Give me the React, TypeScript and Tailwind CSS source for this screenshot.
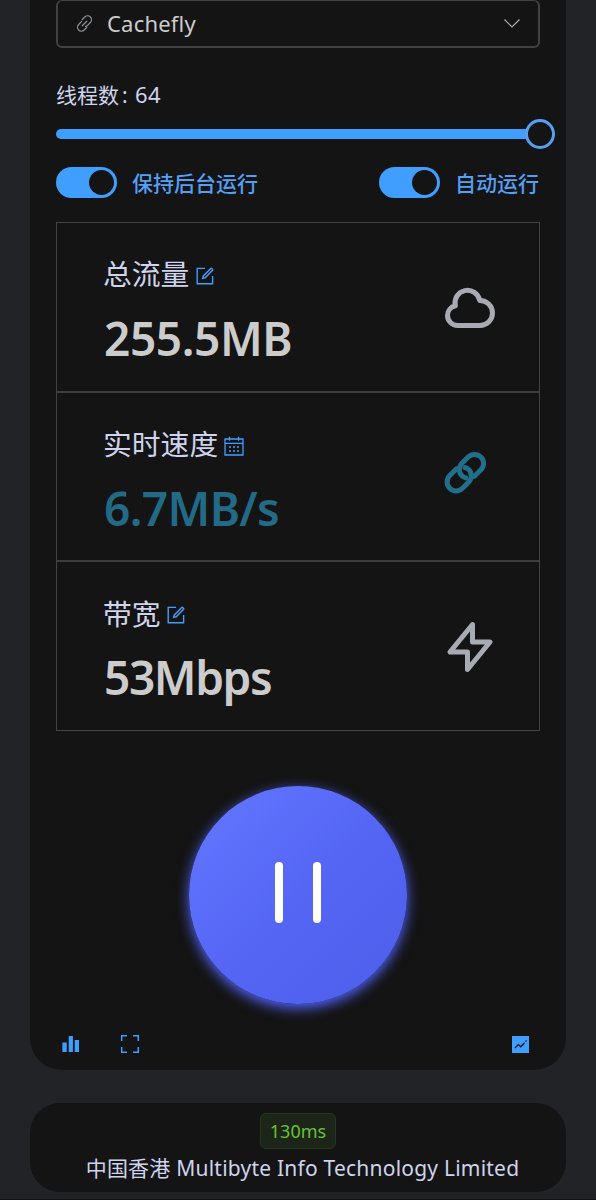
import React, { useState } from 'react'

interface IconProps {
  className?: string
}

function LinkIcon({ className }: IconProps) {
  return (
    <svg viewBox="0 0 18 18" className={className} fill="none" stroke="currentColor" strokeWidth="1.3" strokeLinecap="round">
      <path d="M6.6 4.8 9.3 2.1a4 4 0 0 1 5.9 0 4.2 4.2 0 0 1 0 5.9L12 11.2q-1 .9-2 1" />
      <path d="M11.4 13.2 8.7 15.9a4 4 0 0 1-5.9 0 4.2 4.2 0 0 1 0-5.9L6 6.8" />
      <path d="M6.6 11.4 11.4 6.6" />
    </svg>
  )
}

function EditIcon({ className }: IconProps) {
  return (
    <svg viewBox="0 0 18 18" className={className} fill="none" stroke="currentColor" strokeWidth="1.4">
      <path d="M9 1.4H1.2v15.4h15.4V9" />
      <path d="M6.6 11.4 7.3 8.9 14.5 1.7a1 1 0 0 1 1.4 0l.5.5a1 1 0 0 1 0 1.4L9.2 10.8z" />
    </svg>
  )
}

function CalendarIcon({ className }: IconProps) {
  return (
    <svg viewBox="0 0 20 20" className={className} fill="none" stroke="currentColor" strokeWidth="1.3">
      <path d="M1 3h18v16H1zM1 7.3h18M5.5.7v4M14.5.7v4" />
      <path d="M5 11h2M9 11h2M13 11h2M5 15h2M9 15h2M13 15h2" />
    </svg>
  )
}

function CloudIcon({ className }: IconProps) {
  return (
    <svg viewBox="0 0 24 24" className={className} fill="none" stroke="currentColor" strokeWidth="2" strokeLinecap="round" strokeLinejoin="round">
      <path d="M3 15a4 4 0 004 4h9a5 5 0 10-.1-9.999 5.002 5.002 0 10-9.78 2.096A4.001 4.001 0 003 15z" />
    </svg>
  )
}

function ChainIcon({ className }: IconProps) {
  return (
    <svg viewBox="0 0 24 24" className={className} fill="none" stroke="currentColor" strokeWidth="2" strokeLinecap="round" strokeLinejoin="round">
      <path d="M6.5 8.4 3.9 11a3.6 3.6 0 0 0 5.1 5.1l2.5-2.5a3.55 3.55 0 0 0 0-5q-.5-.5-1.5-.8" />
      <path d="M13.76 11.34 16.36 8.74a3.6 3.6 0 0 0-5.1-5.1l-2.5 2.5a3.55 3.55 0 0 0 0 5q.5.5 1.5.8" />
    </svg>
  )
}

function BoltIcon({ className }: IconProps) {
  return (
    <svg viewBox="0 0 24 24" className={className} fill="none" stroke="currentColor" strokeWidth="2" strokeLinecap="round" strokeLinejoin="round">
      <path d="M13 10V3L4 14h7v7l9-11h-7z" />
    </svg>
  )
}

const stats = [
  { title: '总流量', value: '255.5MB', mark: EditIcon, markClass: 'w-[18px] h-[18px] ml-[7px] mt-[4px]', icon: CloudIcon, valueClass: 'text-[#cccccc] tracking-[-0.4px]', iconClass: 'text-[#a8abb2]' },
  { title: '实时速度', value: '6.7MB/s', mark: CalendarIcon, markClass: 'w-5 h-5 ml-[6px] mt-[4px]', icon: ChainIcon, valueClass: 'text-[#226a85] tracking-[-0.6px]', iconClass: 'text-[#226f8b]' },
  { title: '带宽', value: '53Mbps', mark: EditIcon, markClass: 'w-[18px] h-[18px] ml-[6px] mt-[4px]', icon: BoltIcon, valueClass: 'text-[#cccccc] tracking-[-1.4px]', iconClass: 'text-[#a8abb2]' },
]

interface ToggleProps {
  label: string
}

function Toggle({ label }: ToggleProps) {
  const [on, setOn] = useState(true)

  return (
    <button onClick={() => setOn(!on)} className="flex items-center">
      <span className={`flex w-[61px] h-[31px] rounded-full p-[3px] ${on ? 'bg-[#409eff] justify-end' : 'bg-[#4c4d4f] justify-start'}`}>
        <span className="w-[25px] h-[25px] rounded-full bg-[#141414]" />
      </span>
      <span className="ml-[15px] mr-px pt-[2px] text-[21px] leading-[29px] font-medium text-[#559ff5]">{label}</span>
    </button>
  )
}

export default function App() {
  const [running, setRunning] = useState(true)

  return (
    <div className="h-[1200px] overflow-hidden bg-[#222327] px-[30px] border-b border-[#141414] font-['Noto_Sans','Noto_Sans_CJK_SC',sans-serif]">
      <div className="h-[1070px] rounded-b-[32px] bg-[#141414] px-[26px]">
        {/* Node select */}
        <div className="flex items-center h-12 px-[18px] pb-px border-2 border-t border-[#414243] rounded-md text-[#cfd3dc]">
          <LinkIcon className="w-[17px] h-[17px] text-[#8d9095]" />
          <span className="ml-[14px] text-[22px] tracking-[0.2px] leading-[44px] text-[#cccccc]">Cachefly</span>
          <svg viewBox="0 0 16 9" className="ml-auto w-4 h-[9px] text-[#a8abb2]" fill="none" stroke="currentColor" strokeWidth="1.2">
            <path d="M.5.5 8 8 15.5.5" />
          </svg>
        </div>

        {/* Threads */}
        <div className="mt-[31px] h-[30px] text-[21px] leading-[30px] text-[#cfd3ec]">
          线程数<span className="ml-[3px]">: </span><span className="text-[22px] tracking-[0.4px] ml-[2px]">64</span>
        </div>
        <div className="relative mt-[20px] h-[10px] rounded-full bg-[#409eff]">
          <div className="absolute -right-[15px] -top-[10px] w-[30px] h-[30px] rounded-full border-[3px] border-[#559ff5] bg-[#141414]" />
        </div>

        <div className="mt-[28px] flex justify-between">
          <Toggle label="保持后台运行" />
          <Toggle label="自动运行" />
        </div>

        {/* Stats */}
        <div className="mt-6 h-[509px] border border-[#414243] divide-y-2 divide-[#3c3d3f] flex flex-col">
          {stats.map(({ title, value, mark: Mark, markClass, icon: Icon, valueClass, iconClass }) => (
            <div key={title} className="flex-1 flex justify-between pl-[46px] pr-[39px]">
              <div className="pt-[31px]">
                <div className="flex items-center h-10 text-[28.8px] text-[#cfd3ec]">
                  <span>{title}</span>
                  <Mark className={`${markClass} text-[#409eff]`} />
                </div>
                <div className={`mt-[14px] ml-px h-[60px] leading-[60px] text-[46px] font-semibold ${valueClass}`}>{value}</div>
              </div>
              <Icon className={`mt-[55px] w-[60px] h-[60px] ${iconClass}`} />
            </div>
          ))}
        </div>

        <button
          onClick={() => setRunning(!running)}
          className="mt-[55px] mx-auto flex items-center justify-center gap-[30px] w-[218px] h-[218px] pb-[5px] rounded-full bg-linear-to-br from-[#6378ff] via-[#5566f5] to-[#4d5eea] shadow-[0_4px_13px_#5465ff]"
        >
          {running ? (
            <>
              <span className="w-2 h-[61px] rounded-full bg-white" />
              <span className="w-2 h-[61px] rounded-full bg-white" />
            </>
          ) : (
            <svg viewBox="0 0 24 24" className="w-16 h-16" fill="white">
              <path d="M7 4v16l13-8z" />
            </svg>
          )}
        </button>

        {/* Toolbar */}
        <div className="mt-[30px] pl-[6px] pr-[11px] flex items-center text-[#409eff]">
          <svg viewBox="0 0 18 18" className="w-[18px] h-[18px]" fill="currentColor">
            <path d="M.4 7.5h4.3V17H.4zM6.7 1h4.2v16H6.7zM12.7 5H17v12h-4.3z" />
          </svg>
          <svg viewBox="0 0 20 20" className="w-5 h-5 ml-[40px]" fill="none" stroke="currentColor" strokeWidth="1.5">
            <path d="M1.7 7V1.7H7M13 1.7h5.3V7M18.3 13v5.3H13M7 18.3H1.7V13" />
          </svg>
          <svg viewBox="0 0 17 17" className="w-[17px] h-[17px] ml-auto">
            <path d="M0 0h17v17H0z" fill="currentColor" />
            <path d="M3 12 6.2 8.6 8.8 10.8 12.5 6.8" fill="none" stroke="#141414" strokeWidth="1.3" />
            <circle cx="14" cy="5" r=".8" fill="#141414" />
          </svg>
        </div>
      </div>

      {/* Connection info */}
      <div className="mt-[33px] h-[89px] rounded-[30px] bg-[#141414] pt-[10px] flex flex-col items-center">
        <div className="flex items-center justify-center w-[76px] h-9 rounded-md border border-[#25371c] bg-[#1c2518] text-[18px] text-[#67c23a]">
          130ms
        </div>
        <div className="mt-[4px] ml-[9px] h-[30px] leading-[30px] whitespace-nowrap text-[21px] tracking-[0.22px] text-[#cfd3ec]">
          中国香港 Multibyte Info Technology Limited
        </div>
      </div>
    </div>
  )
}
